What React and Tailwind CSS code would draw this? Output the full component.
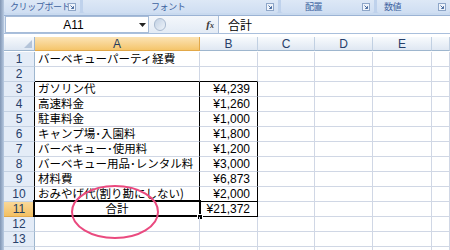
const JP = { fontFamily: '"Noto Sans CJK JP", "Liberation Sans", sans-serif' };
const LS = { fontFamily: '"Liberation Sans", "Noto Sans CJK JP", sans-serif' };

const rows = [
  ["バーベキューパーティ経費", ""],
  ["", ""],
  ["ガソリン代", "¥4,239"],
  ["高速料金", "¥1,260"],
  ["駐車料金", "¥1,000"],
  ["キャンプ場･入園料", "¥1,800"],
  ["バーベキュー･使用料", "¥1,200"],
  ["バーベキュー用品･レンタル料", "¥3,000"],
  ["材料費", "¥6,873"],
  ["おみやげ代(割り勘にしない)", "¥2,000"],
  ["合計", "¥21,372"],
  ["", ""],
  ["", ""],
  ["", ""],
];

function Launcher() {
  return (
    <svg width="8" height="8" viewBox="0 0 8 8" className="shrink-0">
      <rect x="0.5" y="0.5" width="7" height="7" fill="#eef3fa" stroke="#8ea6c8" />
      <path d="M2.5 2.5 L5.5 5.5 M5.5 3.2 V5.5 H3.2" stroke="#4d6ea0" strokeWidth="1" fill="none" />
    </svg>
  );
}

function Group({ w, label, labelLeft, last }) {
  return (
    <div
      className={`relative h-full bg-gradient-to-b from-[#dde8f6] to-[#cfdef2] rounded-b-[2px] ${last ? "flex-1" : ""}`}
      style={w ? { width: w } : undefined}
    >
      <span
        className="absolute top-[1px] text-[9px] leading-[11px] text-[#3d62a0] tracking-[-0.4px]"
        style={{ ...JP, left: labelLeft }}
      >
        {label}
      </span>
      <span className="absolute top-[3px] right-[4px]">
        <Launcher />
      </span>
    </div>
  );
}

export default function App() {
  const gridLine = "border-[#d0d7e5]";
  return (
    <div className="w-[450px] h-[250px] overflow-hidden flex bg-white relative">
      <div className="w-[4px] shrink-0 bg-gradient-to-r from-[#8196b4] to-[#b9cbe2]" />
      <div className="flex-1 flex flex-col min-w-0">
        {/* ribbon group labels */}
        <div className="h-[13px] flex gap-[3px] bg-[#bfd2ec] shrink-0">
          <Group w={76} label="クリップボード" labelLeft={6} />
          <Group w={195} label="フォント" labelLeft={68} />
          <Group w={93} label="配置" labelLeft={24} />
          <Group label="数値" labelLeft={7} last />
        </div>
        <div className="h-[3px] shrink-0 bg-[#c9daef] border-b border-[#9bb3d4]" />
        {/* formula bar */}
        <div className="h-[18px] shrink-0 flex bg-[#dbe6f4] border-b border-[#a9bfdc]">
          <div className="w-[144px] ml-[1px] bg-white border border-[#a7bcd8] flex items-center relative">
            <span className="flex-1 text-center text-[12px] text-black pl-[2px]" style={LS}>A11</span>
            <svg width="7" height="4" viewBox="0 0 7 4" className="mr-[2px]">
              <path d="M0 0 H7 L3.5 4 Z" fill="#222" />
            </svg>
          </div>
          <div className="w-[69px] flex items-center relative bg-gradient-to-b from-[#f4f7fb] to-[#e3ebf5]">
            <div className="ml-[5px] w-[12px] h-[13px] rounded-full bg-gradient-to-br from-[#c2d1e4] to-[#eef3f9] border border-[#a9bad0]" />
            <span className="ml-auto mr-[4px] text-[11px] italic font-bold text-[#3a3a3a]" style={{ fontFamily: '"Liberation Serif", serif' }}>
              f<span className="text-[8px]">x</span>
            </span>
          </div>
          <div className="flex-1 bg-white border-l border-[#a7bcd8] flex items-center pl-[9px]">
            <span className="text-[12px] text-black leading-none" style={JP}>合計</span>
          </div>
        </div>
        <div className="h-[3px] shrink-0 bg-white" />
        {/* sheet */}
        <div className="grid grid-cols-[31px_165px_58px_57px_58px_59px_1fr] auto-rows-[15px]">
          {/* header */}
          <div className="h-[14px] relative bg-gradient-to-b from-[#f6f9fc] to-[#dde6f2] border-r border-b border-[#9eb6ce]">
            <svg width="8" height="8" viewBox="0 0 8 8" className="absolute right-[2px] bottom-[2px]">
              <path d="M8 0 V8 H0 Z" fill="#b4c4d9" />
            </svg>
          </div>
          {["A", "B", "C", "D", "E", ""].map((c, i) => (
            <div
              key={c + i}
              className={`h-[14px] flex items-center justify-center text-[12px] leading-none border-r border-b ${
                c === "A"
                  ? "bg-gradient-to-b from-[#fbe3b4] to-[#f5c56a] border-[#e2a849] text-[#243c5c]"
                  : "bg-gradient-to-b from-[#f8fbfd] to-[#dfe7f2] border-r-[#c1d0e2] border-b-[#9eb6ce] text-[#27406a]"
              }`}
              style={LS}
            >
              {c}
            </div>
          ))}
          {rows.map(([a, b], idx) => {
            const r = idx + 1;
            const inTable = r >= 3 && r <= 11;
            const aBottom = r === 2 || r === 10 || r === 11;
            return [
              <div
                key={"h" + r}
                className={`flex items-center justify-center text-[12px] leading-none border-b border-r ${
                  r === 11
                    ? "bg-gradient-to-b from-[#f9d898] to-[#f3c062] border-b-[#e2a849] text-[#243c5c]"
                    : "bg-[#e4ecf7] border-b-[#c5d2e3] text-[#27406a]"
                } ${inTable ? "border-r-black" : "border-r-[#9eb6ce]"}`}
                style={LS}
              >
                {r <= 13 ? r : ""}
              </div>,
              <div
                key={"a" + r}
                className={`relative flex items-center border-b border-r whitespace-nowrap ${gridLine} ${
                  aBottom ? "border-b-black" : ""
                } ${r >= 3 && r <= 10 ? "border-r-black" : ""} ${r === 11 ? "justify-center border-r-black" : "pl-[3px]"}`}
              >
                <span className="text-[11.5px] text-black leading-none" style={JP}>{a}</span>
                {r === 11 && (
                  <>
                    <span className="absolute left-[-2px] top-[-2px] right-[-2px] bottom-[-1px] border-2 border-black" />
                    <span className="absolute right-[-4px] bottom-[-4px] w-[6px] h-[6px] bg-black border border-white" />
                  </>
                )}
              </div>,
              <div
                key={"b" + r}
                className={`flex items-center justify-end pr-[7px] border-b border-r ${gridLine} ${
                  aBottom ? "border-b-black" : ""
                } ${inTable ? "border-r-black" : ""}`}
              >
                <span className="text-[12px] text-black leading-none" style={LS}>{b}</span>
              </div>,
              ...[0, 1, 2, 3].map((k) => (
                <div key={"x" + r + k} className={`border-b border-r ${gridLine}`} />
              )),
            ];
          })}
        </div>
      </div>
      {/* pink circle annotation */}
      <svg className="absolute left-[69px] top-[183px]" width="94" height="58" viewBox="0 0 94 58">
        <ellipse cx="46" cy="29" rx="43" ry="26" fill="none" stroke="#ea4a7f" strokeWidth="2" />
      </svg>
    </div>
  );
}
